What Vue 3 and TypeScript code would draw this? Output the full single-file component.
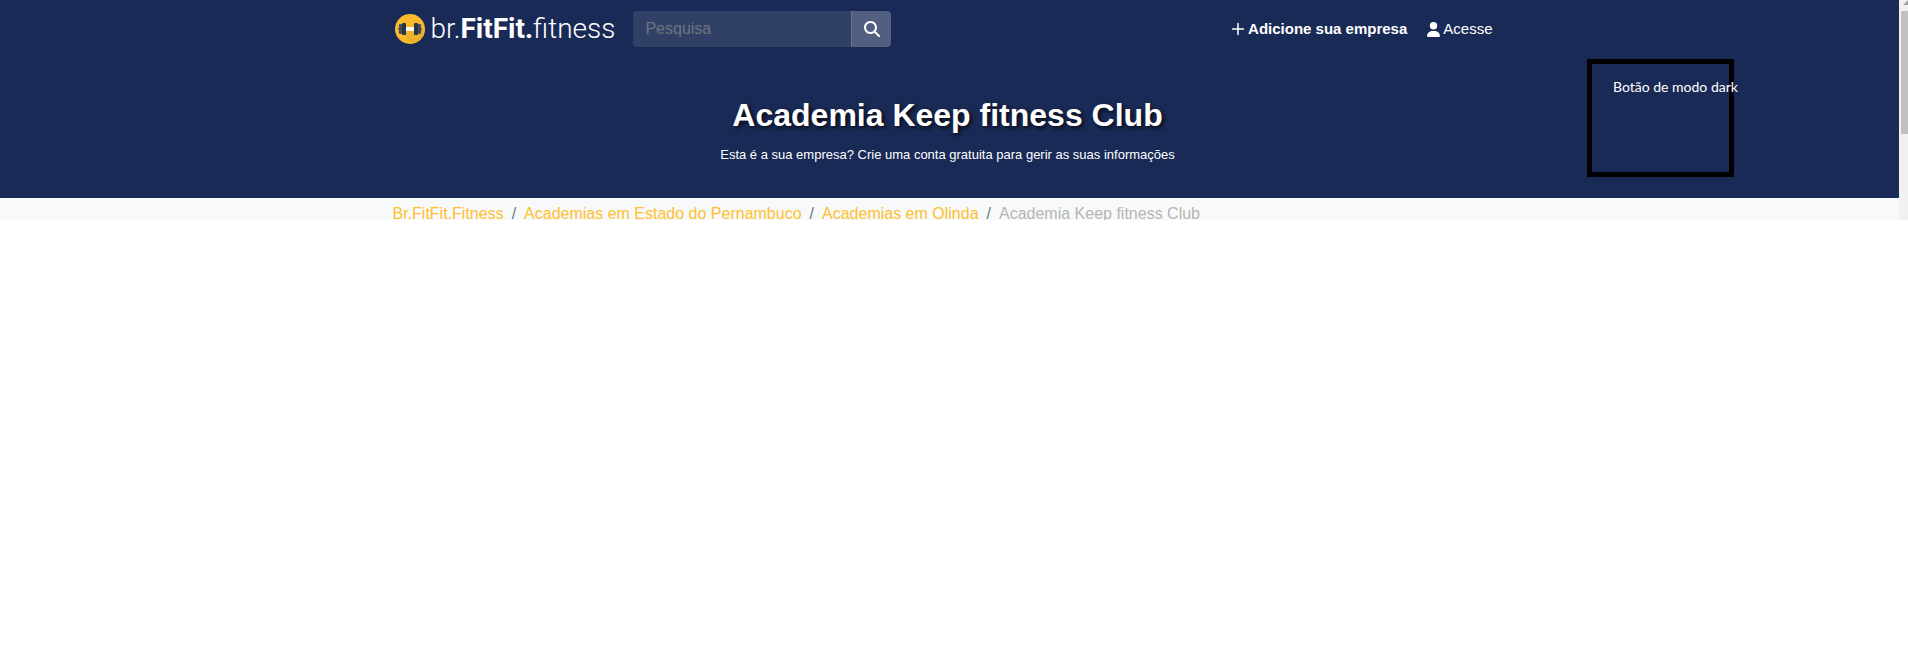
<script setup lang="ts">
import { ref } from 'vue'

interface Crumb {
  label: string
  href?: string
}

const query = ref('')
const crumbs: Crumb[] = [
  { label: 'Br.FitFit.Fitness', href: '#inicio' },
  { label: 'Academias em Estado do Pernambuco', href: '#pernambuco' },
  { label: 'Academias em Olinda', href: '#olinda' },
  { label: 'Academia Keep fitness Club' },
]
</script>

<template>
  <div class="viewport">
    <div class="page">
      <header class="header">
        <nav class="container navbar">
          <a class="brand" href="#inicio">
            <svg class="brand-icon" viewBox="0 0 30 30" aria-hidden="true">
              <circle cx="15" cy="15" r="15" fill="#f6b92b" />
              <path d="M8 20 17 29.800A15 15 0 0 0 29.800 17L25 12 19 17H11z" fill="#eeb028" />
              <rect x="10" y="13" width="10" height="4" fill="#f7f6f2" />
              <rect x="3" y="14" width="2" height="2" fill="#6b7278" />
              <rect x="25" y="14" width="2" height="2" fill="#6b7278" />
              <rect x="4" y="10" width="3" height="10" rx="1" fill="#3c4d60" />
              <rect x="23" y="10" width="3" height="10" rx="1" fill="#3c4d60" />
              <rect x="7" y="9" width="4" height="12" rx="1" fill="#2b3442" />
              <rect x="19" y="9" width="4" height="12" rx="1" fill="#2b3442" />
            </svg>
            <span class="brand-name">br.<b>FitFit.</b>fitness</span>
          </a>
          <form class="search" role="search" @submit.prevent>
            <input v-model="query" class="search-input" type="text" placeholder="Pesquisa" aria-label="Pesquisa" />
            <button class="search-button" type="submit" aria-label="Pesquisar">
              <svg viewBox="0 0 512 512" width="16" height="16" aria-hidden="true">
                <path fill="currentColor" d="M416 208c0 45.900-14.900 88.300-40 122.700L502.600 457.400c12.500 12.500 12.500 32.800 0 45.300s-32.800 12.500-45.300 0L330.700 376c-34.400 25.200-76.800 40-122.700 40C93.100 416 0 322.900 0 208S93.100 0 208 0S416 93.100 416 208zM208 352a144 144 0 1 0 0-288 144 144 0 1 0 0 288z" />
              </svg>
            </button>
          </form>
          <div class="links">
            <a class="link add" href="#adicionar">
              <svg viewBox="0 0 14 14" width="14" height="14" aria-hidden="true">
                <path d="M7 1.500V12.500M1.500 7H12.500" fill="none" stroke="currentColor" stroke-width="1.500" stroke-linecap="round" />
              </svg>
              <span>Adicione sua empresa</span>
            </a>
            <a class="link" href="#acesse">
              <svg viewBox="0 0 448 512" width="13" height="15" aria-hidden="true">
                <path fill="currentColor" d="M224 256A128 128 0 1 0 224 0a128 128 0 1 0 0 256zm-45.700 48C79.800 304 0 383.800 0 482.300C0 498.700 13.300 512 29.700 512H418.300c16.400 0 29.700-13.300 29.700-29.700C448 383.800 368.200 304 269.700 304H178.300z" />
              </svg>
              <span>Acesse</span>
            </a>
          </div>
        </nav>
        <div class="hero">
          <h1>Academia Keep fitness Club</h1>
          <a class="claim" href="#conta">Esta é a sua empresa? Crie uma conta gratuita para gerir as suas informações</a>
        </div>
        <button class="dark-toggle" type="button">Botão de modo dark</button>
      </header>
      <nav class="crumb-bar" aria-label="Navegação estrutural">
        <ol class="container crumbs">
          <li v-for="crumb in crumbs" :key="crumb.label">
            <a v-if="crumb.href" :href="crumb.href">{{ crumb.label }}</a>
            <span v-else aria-current="page">{{ crumb.label }}</span>
          </li>
        </ol>
      </nav>
    </div>
    <div class="scroll-track" aria-hidden="true">
      <svg class="scroll-arrow" viewBox="0 0 9 11">
        <path d="M4 5 9 0V5z" fill="#a3a3a3" />
      </svg>
      <div class="scroll-thumb"></div>
    </div>
  </div>
</template>

<style>
body {
  background: #fff;
}
</style>

<style scoped>
* {
  box-sizing: border-box;
}

.viewport {
  display: flex;
  font-family: "Liberation Sans", Arial, sans-serif;
  font-size: 16px;
  line-height: 24px;
}

.page {
  flex: 1;
  min-width: 0;
}

a {
  color: inherit;
  text-decoration: none;
}

.container {
  width: 100%;
  max-width: 1138px;
  margin: 0 auto;
  padding: 0 12px;
}

.header {
  position: relative;
  padding-bottom: 31px;
  background: #1a2a56;
  color: #fff;
}

.navbar {
  display: flex;
  align-items: center;
  padding-top: 11px;
  padding-bottom: 11px;
}

.brand {
  display: flex;
  align-items: center;
  gap: 6px;
  margin-left: 2px;
}

.brand-icon {
  width: 30px;
  height: 30px;
}

.brand-name {
  font-family: Roboto, sans-serif;
  font-size: 28px;
  font-weight: 300;
  line-height: 32px;
  white-space: nowrap;
}

.brand-name b {
  font-weight: 700;
}

.search {
  display: flex;
  width: 258px;
  height: 36px;
  margin-left: 18px;
}

.search-input {
  flex: 1;
  min-width: 0;
  padding: 0 12px;
  border: 0;
  border-radius: 4px 0 0 4px;
  background: #314067;
  color: #fff;
  font: inherit;
}

.search-input::placeholder {
  color: #6c757d;
  opacity: 1;
}

.search-button {
  display: flex;
  align-items: center;
  justify-content: center;
  width: 40px;
  padding: 0;
  border: 0;
  border-left: 1px solid #69748f;
  border-radius: 0 4px 4px 0;
  background: #535f80;
  color: #fff;
}

.links {
  display: flex;
  gap: 20px;
  margin-left: auto;
  margin-right: 14px;
  font-size: 15px;
}

.link {
  display: flex;
  align-items: center;
  gap: 3px;
  white-space: nowrap;
}

.add {
  font-weight: 700;
}

.hero {
  display: flex;
  flex-direction: column;
  align-items: center;
  padding: 37px 4px 0 0;
}

h1 {
  margin: 0;
  font-size: 32px;
  line-height: 40px;
  text-shadow: 2px 2px 4px #000c;
}

.claim {
  margin-top: 8px;
  font-size: 13px;
}

.dark-toggle {
  position: absolute;
  top: 59px;
  right: 165px;
  display: flex;
  width: 147px;
  height: 118px;
  padding: 15px 21px;
  border: 5px solid #000;
  background: transparent;
  color: #fff;
  font-family: Lato, sans-serif;
  font-size: 14px;
  line-height: 16px;
  white-space: nowrap;
}

.crumb-bar {
  height: 22px;
  overflow: hidden;
  background: #f8f9fa;
}

.crumbs {
  display: flex;
  padding-top: 4px;
  list-style: none;
  color: #ffc02e;
}

.crumbs li + li::before {
  content: "/";
  padding: 0 8px;
  color: #6c757d;
}

.crumbs [aria-current] {
  color: #b5b5b5;
}

.scroll-track {
  display: flex;
  flex-direction: column;
  width: 9px;
  background: #f1f1f1;
}

.scroll-arrow {
  width: 9px;
  height: 11px;
}

.scroll-thumb {
  height: 123px;
  margin-left: 2px;
  background: #c1c1c1;
}
</style>
